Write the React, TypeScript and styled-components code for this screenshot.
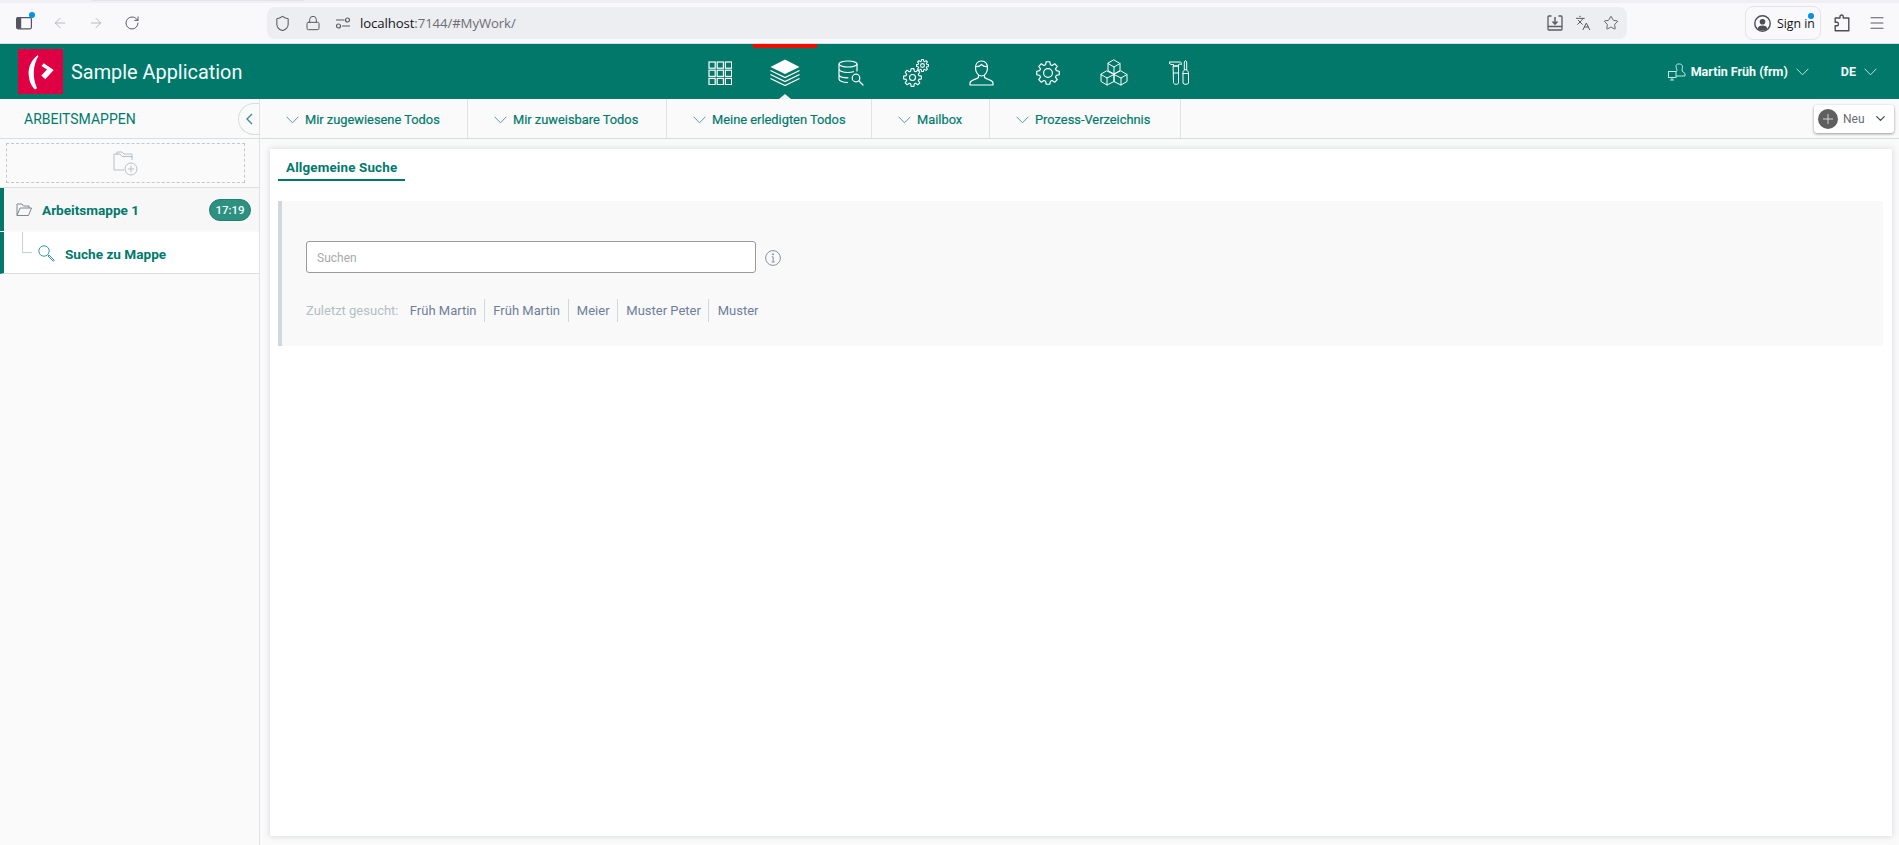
import React from "react";
import styled, { createGlobalStyle } from "styled-components";
import { ArrowLeft, ArrowRight, RotateCw, Shield, Lock, Star, Languages, Menu, ChevronDown, Plus } from "lucide-react";

const Global = createGlobalStyle`
  html, body { margin: 0; padding: 0; height: 100%; overflow: hidden; background: #fafafa; }
  body { font-family: Roboto, "Liberation Sans", Arial, sans-serif; }
  * { box-sizing: border-box; }
`;

const teal = "#007a6c";

const Page = styled.div`
  width: 1899px;
  height: 845px;
  display: flex;
  flex-direction: column;
  overflow: hidden;
`;

/* browser chrome */
const TabStrip = styled.div`
  height: 3px;
  background: #f0f0f4;
  flex: none;
  display: flex;
  padding-left: 92px;
`;
const TabPiece = styled.div`
  width: 212px;
  height: 1px;
  background: #e4e4e8;
`;
const BrowserBar = styled.div`
  height: 41px;
  flex: none;
  background: #f9f9fb;
  border-bottom: 1px solid #dcdce0;
  display: flex;
  align-items: center;
  padding: 0 13px 0 16px;
  color: #5b5b66;
`;
const NavGroup = styled.div`
  display: flex;
  align-items: center;
  gap: 20px;
`;
const TabIconWrap = styled.div`
  position: relative;
  width: 16px;
  height: 16px;
  display: flex;
`;
const Dot = styled.span`
  position: absolute;
  top: -3px;
  right: -3px;
  width: 6px;
  height: 6px;
  border-radius: 50%;
  background: #0090ed;
`;
const AddressBar = styled.div`
  margin-left: 127px;
  width: 1360px;
  height: 32px;
  border-radius: 8px;
  background: #edeef1;
  display: flex;
  align-items: center;
  padding: 0 8px 0 7px;
`;
const AddressIcons = styled.div`
  display: flex;
  align-items: center;
  gap: 14px;
`;
const Url = styled.div`
  margin-left: 9px;
  flex: 1;
  font-size: 13.2px;
  font-family: "Open Sans", Roboto, sans-serif;
  color: #6d6d76;
  letter-spacing: -0.1px;
`;
const UrlHost = styled.span`
  color: #15141a;
`;
const AddressActions = styled.div`
  display: flex;
  align-items: center;
  gap: 12px;
`;
const SignIn = styled.div`
  position: relative;
  margin-left: auto;
  width: 76px;
  height: 34px;
  border: 1px solid #e3e3e8;
  border-radius: 8px;
  display: flex;
  align-items: center;
  gap: 6px;
  padding-left: 8px;
  font-size: 12.3px;
  font-family: "Open Sans", Roboto, sans-serif;
  color: #15141a;
  white-space: nowrap;
`;
const SignInDot = styled(Dot)`
  top: 6px;
  right: 6px;
`;
const ChromeRight = styled.div`
  margin-left: 13px;
  display: flex;
  align-items: center;
  gap: 18px;
`;

/* app header */
const Header = styled.header`
  height: 55px;
  flex: none;
  background: #02786a;
  display: flex;
  align-items: center;
  color: #fff;
`;
const Brand = styled.div`
  width: 687px;
  flex: none;
  display: flex;
  align-items: center;
  padding-left: 18px;
`;
const Logo = styled.svg`
  width: 45px;
  height: 45px;
  flex: none;
`;
const Title = styled.div`
  margin-left: 8px;
  padding-top: 2px;
  font-size: 19.9px;
  color: #f2fffb;
`;
const MainNav = styled.nav`
  display: flex;
  height: 100%;
`;
const NavCell = styled.div<{ $active?: boolean; $w: number }>`
  position: relative;
  width: ${(p) => p.$w}px;
  height: 100%;
  display: flex;
  align-items: center;
  justify-content: center;
  padding-top: 2px;
  color: #fff;
  &::before {
    content: "";
    display: ${(p) => (p.$active ? "block" : "none")};
    position: absolute;
    top: 0;
    left: 1px;
    right: 1px;
    height: 4px;
    background: #ec0d00;
  }
  &::after {
    content: "";
    display: ${(p) => (p.$active ? "block" : "none")};
    position: absolute;
    bottom: 0;
    left: 50%;
    margin-left: -6px;
    border-left: 6px solid transparent;
    border-right: 6px solid transparent;
    border-bottom: 5px solid #eef2f4;
  }
`;
const UserArea = styled.div`
  margin-left: auto;
  display: flex;
  align-items: center;
  padding-right: 22px;
  font-size: 12.5px;
  font-weight: 700;
  color: #f4fffc;
`;
const UserName = styled.span`
  margin-left: 5px;
  margin-right: 8px;
`;
const Lang = styled.span`
  margin-left: 32px;
  margin-right: 8px;
`;

/* body */
const Body = styled.div`
  flex: 1;
  display: flex;
  min-height: 0;
`;
const Sidebar = styled.aside`
  width: 260px;
  flex: none;
  background: #fafafa;
  border-right: 1px solid #dfe3e5;
  display: flex;
  flex-direction: column;
`;
const SideHead = styled.div`
  height: 40px;
  flex: none;
  border-bottom: 1px solid #d9dfe0;
  display: flex;
  align-items: center;
  justify-content: space-between;
  padding-left: 24px;
  font-size: 14px;
  color: ${teal};
`;
const Collapse = styled.div`
  width: 21px;
  height: 32px;
  border: 1px solid #d5dee0;
  border-right: none;
  border-radius: 16px 0 0 16px;
  display: flex;
  align-items: center;
  justify-content: center;
  color: #3c8f98;
`;
const DropWrap = styled.div`
  flex: none;
  padding: 4px 14px 4px 6px;
  border-bottom: 1px solid #dcdfe1;
`;
const DropZone = styled.div`
  height: 40px;
  border: 1px dashed #c4c8cc;
  display: flex;
  align-items: center;
  justify-content: center;
`;
const FolderRow = styled.div`
  height: 43px;
  border-left: 4px solid #02786a;
  background: #f7f7f7;
  display: flex;
  align-items: center;
  padding: 0 8px 0 12px;
  font-size: 13.6px;
  font-weight: 700;
  color: ${teal};
`;
const FolderName = styled.span`
  margin-left: 10px;
`;
const Time = styled.span`
  margin-left: auto;
  width: 42px;
  height: 22px;
  border-radius: 11px;
  background: #2e9080;
  border: 1px solid #1f7f70;
  color: #f3fffb;
  font-size: 11.5px;
  font-weight: 500;
  display: flex;
  align-items: center;
  justify-content: center;
`;
const SearchRow = styled.div`
  margin-top: 1px;
  height: 42px;
  border-left: 4px solid #02786a;
  border-bottom: 1px solid #dcdfe1;
  background: #fff;
  display: flex;
  align-items: flex-start;
  font-size: 13.6px;
  font-weight: 700;
  color: ${teal};
`;
const TreeLine = styled.div`
  margin-left: 18px;
  width: 10px;
  height: 21px;
  border-left: 1px solid #c8d2d6;
  border-bottom: 1px solid #c8d2d6;
`;
const SearchLabel = styled.div`
  margin-left: 6px;
  height: 41px;
  padding-top: 2px;
  display: flex;
  align-items: center;
  gap: 10px;
`;

const Main = styled.main`
  flex: 1;
  min-width: 0;
  display: flex;
  flex-direction: column;
  background: #fafafa;
`;
const SubNav = styled.div`
  height: 40px;
  flex: none;
  display: flex;
  align-items: center;
  border-bottom: 1px solid #d5dcdd;
  padding-right: 5px;
`;
const SubTab = styled.div<{ $w: number }>`
  width: ${(p) => p.$w}px;
  height: 39px;
  display: flex;
  align-items: center;
  gap: 6px;
  padding: 2px 0 0 26px;
  border-right: 1px solid #e0e2e3;
  font-size: 12.85px;
  -webkit-text-stroke: 0.2px ${teal};
  color: ${teal};
  white-space: nowrap;
`;
const NewButton = styled.div`
  margin-left: auto;
  width: 80px;
  height: 28px;
  background: #fff;
  border-radius: 3px;
  box-shadow: 0 1px 3px rgba(0, 0, 0, 0.4);
  display: flex;
  align-items: center;
  padding-left: 4px;
  font-size: 12px;
  color: #666c70;
`;
const PlusCircle = styled.span`
  width: 20px;
  height: 20px;
  border-radius: 50%;
  background: #5f5f5f;
  color: #dff2ea;
  display: flex;
  align-items: center;
  justify-content: center;
  margin-right: 5px;
`;
const NewChevron = styled.span`
  margin-left: 8px;
  display: flex;
  color: #3d4a52;
`;
const Content = styled.div`
  flex: 1;
  min-height: 0;
  padding: 10px 7px 9px 10px;
`;
const Card = styled.section`
  height: 100%;
  background: #fff;
  box-shadow: 0 0 6px rgba(90, 100, 140, 0.25);
  padding: 0 9px 0 8px;
`;
const TabBar = styled.div`
  display: flex;
`;
const ActiveTab = styled.div`
  height: 32px;
  padding: 7px 8px 0;
  display: flex;
  align-items: center;
  border-bottom: 2px solid #02786a;
  font-size: 13.4px;
  font-weight: 700;
  letter-spacing: 0.15px;
  color: ${teal};
`;
const SearchPanel = styled.div`
  margin-top: 20px;
  height: 145px;
  background: #f9f9f9;
  border-left: 4px solid #d0d8df;
  padding: 40px 0 0 24px;
`;
const InputRow = styled.div`
  display: flex;
  align-items: center;
  gap: 9px;
`;
const SearchInput = styled.input`
  width: 450px;
  height: 32px;
  border: 1px solid #9a9a9a;
  border-radius: 3px;
  background: #fff;
  padding: 2px 10px 0;
  font-family: inherit;
  font-size: 12px;
  outline: none;
  &::placeholder { color: #a9a9a9; opacity: 1; }
`;
const InfoWrap = styled.span`
  display: flex;
  padding-top: 2px;
`;
const Recent = styled.div`
  margin-top: 26px;
  display: flex;
  align-items: center;
  height: 23px;
  font-size: 13px;
`;
const RecentLabel = styled.span`
  color: #b4bfc6;
  margin-right: 3px;
`;
const RecentItem = styled.span<{ $last?: boolean }>`
  height: 100%;
  display: flex;
  align-items: center;
  padding: 0 7.5px 0 8.3px;
  color: #6e7f9c;
  border-right: ${(p) => (p.$last ? "none" : "1px solid #cfd8dc")};
`;

/* drawings */
const Svg = styled.svg`
  display: block;
  flex: none;
`;

function gearPath(cx: number, cy: number, R: number, r: number, teeth: number) {
  const step = (Math.PI * 2) / teeth;
  const pts: string[] = [];
  for (let i = 0; i < teeth; i++) {
    const a = i * step - Math.PI / 2;
    const w = step * 0.2;
    const seq: [number, number][] = [
      [r, a - step * 0.36],
      [R, a - w],
      [R, a + w],
      [r, a + step * 0.36],
    ];
    seq.forEach(([rad, an]) => pts.push(`${(cx + rad * Math.cos(an)).toFixed(2)} ${(cy + rad * Math.sin(an)).toFixed(2)}`));
  }
  return "M" + pts.join("L") + "Z";
}

const LineProps = { fill: "none", stroke: "currentColor", strokeWidth: 1.2, strokeLinejoin: "round" as const, strokeLinecap: "round" as const };

const GridIcon = () => (
  <Svg width="24" height="24" viewBox="0 0 24 24" {...LineProps}>
    {[0, 1, 2].flatMap((r) =>
      [0, 1, 2].map((c) => <rect key={`${r}${c}`} x={1 + c * 8.2} y={1 + r * 8.2} width="6.2" height="6.2" strokeLinejoin="miter" />)
    )}
  </Svg>
);
const LayersIcon = () => (
  <Svg width="30" height="27" viewBox="0 0 30 27">
    <path d="M15 0.5 L29.5 8 L15 15 L0.5 8 Z" fill="currentColor" />
    <path d="M0.5 11.5 L15 18.5 L29.5 11.5 M0.5 15.5 L15 22.5 L29.5 15.5 M0.5 19.5 L15 26.5 L29.5 19.5" fill="none" stroke="currentColor" strokeWidth="1.3" />
  </Svg>
);
const DbIcon = () => (
  <Svg width="26" height="26" viewBox="0 0 26 26" {...LineProps}>
    <ellipse cx="10" cy="4" rx="9" ry="3" />
    <path d="M1 4 V19 C1 21 5 22.5 9.5 22.5 M19 4 V11 M1 9 C1 11 5 12.5 10 12.5 C12 12.5 14 12.2 15.5 11.7 M1 14.5 C1 16.5 5 17.8 10 17.8" />
    <circle cx="18" cy="18" r="3.8" />
    <path d="M21 21 L25 25" />
  </Svg>
);
const GearsIcon = () => (
  <Svg width="26" height="28" viewBox="0 0 26 28" {...LineProps} strokeWidth={1.1}>
    <path d={gearPath(9.5, 18.5, 9, 6.6, 8)} />
    <circle cx="9.5" cy="18.5" r="3" />
    <path d={gearPath(19.5, 6.5, 6, 4.4, 8)} />
    <circle cx="19.5" cy="6.5" r="1.9" />
  </Svg>
);
const UserIcon = () => (
  <Svg width="25" height="26" viewBox="0 0 25 26" {...LineProps}>
    <path d="M12.5 1 C8.5 1 6.5 4 6.5 8 C6.5 12 9 16 12.5 16 C16 16 18.5 12 18.5 8 C18.5 4 16.5 1 12.5 1 Z" />
    <path d="M6.7 6.5 C9 7 11 6 12.5 4.5 C14 6 16 7 18.3 6.5" />
    <path d="M9.5 15 V17.5 C7 19.5 1 20 1 23 V25 H24 V23 C24 20 18 19.5 15.5 17.5 V15" />
  </Svg>
);
const CogIcon = () => (
  <Svg width="24" height="24" viewBox="0 0 24 24" {...LineProps}>
    <path d={gearPath(12, 12, 11.4, 8.6, 8)} />
    <circle cx="12" cy="12" r="4.4" />
  </Svg>
);
const CubesIcon = () => (
  <Svg width="28" height="27" viewBox="0 0 28 27" {...LineProps} strokeWidth={1}>
    <path d="M14 1 L20 4.5 V11.5 L14 15 L8 11.5 V4.5 Z M8 4.5 L14 8 L20 4.5 M14 8 V15" />
    <path d="M7 12 L14 15.5 V22.5 L7 26 L1 22.5 V15.5 Z M1 15.5 L7 19 L14 15.5 M7 19 V26" />
    <path d="M21 12 L27 15.5 V22.5 L21 26 L14 22.5 V15.5 Z M14 15.5 L21 19 L27 15.5 M21 19 V26" />
  </Svg>
);
const ToolsIcon = () => (
  <Svg width="20" height="26" viewBox="0 0 20 26" {...LineProps} strokeWidth={1}>
    <path d="M0.5 2 H11 C12 2 12.5 3 12.5 4.5 C11.5 4 10.5 4 9.5 4.5 V6 H4.5 V4.5 H2 L0.5 3.5 Z" />
    <path d="M4.5 6 H9.5 V23 C9.5 24.8 4.5 24.8 4.5 23 Z M4.5 13 H9.5" />
    <path d="M15.3 10 V2 L16.5 0.5 L17.7 2 V10" />
    <path d="M15.3 10 C14 11 14 12 14 13 V23 C14 24.8 19.5 24.8 19.5 23 V13 C19.5 12 19 11 17.7 10 Z M14 13.5 H19.5" />
  </Svg>
);

const Chevron = ({ size = 13, color = "#4f9aa0" }: { size?: number; color?: string }) => (
  <Svg width={size} height={size * 0.6} viewBox="0 0 13 8" fill="none" stroke={color} strokeWidth="1">
    <path d="M0.5 0.8 L6.5 7 L12.5 0.8" />
  </Svg>
);

const TabIcon = () => (
  <Svg width="16" height="16" viewBox="0 0 16 16">
    <rect x="0.6" y="2.6" width="14.8" height="11.2" rx="1.5" fill="none" stroke="#55555f" strokeWidth="1.2" />
    <rect x="0.6" y="2.6" width="4.6" height="11.2" rx="1" fill="#55555f" />
  </Svg>
);
const PermIcon = () => (
  <Svg width="16" height="16" viewBox="0 0 16 16" fill="none" stroke="#5b5b66" strokeWidth="1.2">
    <path d="M1 5 H9.5 M7 11 H15" />
    <circle cx="12.5" cy="5" r="2" />
    <circle cx="3.5" cy="11" r="2" />
  </Svg>
);
const SaveIcon = () => (
  <Svg width="16" height="16" viewBox="0 0 16 16" fill="none" stroke="#5b5b66" strokeWidth="1.3">
    <path d="M4.5 1 H1.8 C1.2 1 1 1.4 1 2 V14 C1 14.6 1.2 15 1.8 15 H14.2 C14.8 15 15 14.6 15 14 V2 C15 1.4 14.8 1 14.2 1 H11.5 M1 11.5 H15" />
    <path d="M8 2 V9 M5.5 6.5 L8 9.2 L10.5 6.5" strokeWidth="1.5" />
  </Svg>
);
const AvatarIcon = () => (
  <Svg width="17" height="17" viewBox="0 0 17 17">
    <circle cx="8.5" cy="8.5" r="7.7" fill="none" stroke="#4d4d58" strokeWidth="1.4" />
    <circle cx="8.5" cy="6.8" r="2.8" fill="#4d4d58" />
    <path d="M3.6 13.4 C4.4 11 6.4 10.4 8.5 10.4 C10.6 10.4 12.6 11 13.4 13.4 C12 14.8 10.2 15.3 8.5 15.3 C6.8 15.3 5 14.8 3.6 13.4 Z" fill="#4d4d58" />
  </Svg>
);
const PuzzleIcon = () => (
  <Svg width="16" height="18" viewBox="0 0 16 18" fill="none" stroke="#4d4d58" strokeWidth="1.4" strokeLinejoin="round">
    <path d="M6 2.2 C6 0.6 9.2 0.6 9.2 2.2 V4 H14.8 V16.8 H1.2 V11.8 H3.2 C4.8 11.8 4.8 8.2 3.2 8.2 H1.2 V4 H6 Z" />
  </Svg>
);
const LogoMark = () => (
  <Logo viewBox="0 0 45 45">
    <rect width="45" height="45" fill="#df0043" />
    <path d="M19.5 6.2 C13.5 11 10 18 10.7 26 C11.2 32 13.5 37.5 17 40.5 L19 39.2 C16.5 33.5 15.6 28 15.8 23 C16 17 17.5 12 20.5 7 Z" fill="#fff" />
    <path d="M25.7 14.3 L35.7 21 L27.3 30.3 L23.3 26.6 L29 20.5 L23.5 17 Z" fill="#fff" />
  </Logo>
);
const UserDeskIcon = () => (
  <Svg width="18" height="18" viewBox="0 0 18 18" fill="none" stroke="#bfe8ee" strokeWidth="1">
    <path d="M10 1 C8.8 1 8 2 8 3.5 C8 5 9 6 9 7.5 L7 9.5 V13 H17 V10.5 L14 8 C14 6.5 14.5 5 14.5 3.5 C14.5 2 13 1 11.5 1 Z" />
    <rect x="0.5" y="8.5" width="7.5" height="6" fill="#02786a" />
    <path d="M2 17 H6 M4 15 V17" />
  </Svg>
);
const FolderAdd = () => (
  <Svg width="25" height="25" viewBox="0 0 25 25" fill="none" stroke="#b9c1c8" strokeWidth="1">
    <path d="M4 4 V1 H9 L11 3 H19 V7" />
    <path d="M1 3 H7 L9 5.5 H19 V9 M1 3 V19 H11" />
    <circle cx="18" cy="18" r="6" />
    <path d="M18 14.8 V21.2 M14.8 18 H21.2" />
  </Svg>
);
const FolderOpen = () => (
  <Svg width="16" height="14" viewBox="0 0 16 14" fill="none" stroke="#7e8890" strokeWidth="1">
    <path d="M1 12.5 V1 H6 L7.5 3 H13 V5" />
    <path d="M1 12.5 H12.5 L15.5 5 H4 Z" />
  </Svg>
);
const MagnifierIcon = () => (
  <Svg width="17" height="17" viewBox="0 0 17 17" fill="none" stroke="#3d97a2" strokeWidth="1">
    <circle cx="6" cy="6" r="5.2" />
    <path d="M9.8 9.8 L11 11 M11 10 L16 15 C16.4 15.5 15.5 16.4 15 16 L10 11 Z" />
  </Svg>
);
const InfoIcon = () => (
  <Svg width="16" height="16" viewBox="0 0 16 16" fill="none" stroke="#7f95a8" strokeWidth="1">
    <circle cx="8" cy="8" r="7.4" />
    <path d="M6.8 6.8 H8.2 V12 M6.6 12 H9.6" />
    <circle cx="8" cy="4.3" r="0.6" fill="#7f95a8" />
  </Svg>
);
const CollapseGlyph = () => (
  <Svg width="7" height="12" viewBox="0 0 7 12" fill="none" stroke="currentColor" strokeWidth="1.4">
    <path d="M6 1 L1 6 L6 11" />
  </Svg>
);

const navIcons = [
  { Icon: GridIcon, w: 65 },
  { Icon: LayersIcon, w: 66 },
  { Icon: DbIcon, w: 66 },
  { Icon: GearsIcon, w: 64 },
  { Icon: UserIcon, w: 66 },
  { Icon: CogIcon, w: 67 },
  { Icon: CubesIcon, w: 65 },
  { Icon: ToolsIcon, w: 65 },
];
const subTabs = [
  { label: "Mir zugewiesene Todos", w: 208 },
  { label: "Mir zuweisbare Todos", w: 199 },
  { label: "Meine erledigten Todos", w: 205 },
  { label: "Mailbox", w: 118 },
  { label: "Prozess-Verzeichnis", w: 191 },
];
const recents = ["Früh Martin", "Früh Martin", "Meier", "Muster Peter", "Muster"];

export default function App() {
  return (
    <Page>
      <Global />
      <TabStrip>
        <TabPiece />
      </TabStrip>
      <BrowserBar>
        <NavGroup>
          <TabIconWrap>
            <TabIcon />
            <Dot />
          </TabIconWrap>
          <ArrowLeft size={16} color="#b4b4ba" strokeWidth={1.4} />
          <ArrowRight size={16} color="#b4b4ba" strokeWidth={1.4} />
          <RotateCw size={16} color="#5b5b66" strokeWidth={1.5} />
        </NavGroup>
        <AddressBar>
          <AddressIcons>
            <Shield size={17} color="#5b5b66" strokeWidth={1.5} />
            <Lock size={16} color="#5b5b66" strokeWidth={1.5} />
            <PermIcon />
          </AddressIcons>
          <Url>
            <UrlHost>localhost</UrlHost>:7144/#MyWork/
          </Url>
          <AddressActions>
            <SaveIcon />
            <Languages size={16} color="#5b5b66" strokeWidth={1.5} />
            <Star size={16} color="#5b5b66" strokeWidth={1.4} />
          </AddressActions>
        </AddressBar>
        <SignIn>
          <AvatarIcon />
          Sign in
          <SignInDot />
        </SignIn>
        <ChromeRight>
          <PuzzleIcon />
          <Menu size={18} color="#5b5b66" strokeWidth={1.4} />
        </ChromeRight>
      </BrowserBar>

      <Header>
        <Brand>
          <LogoMark />
          <Title>Sample Application</Title>
        </Brand>
        <MainNav>
          {navIcons.map(({ Icon, w }, i) => (
            <NavCell key={i} $w={w} $active={i === 1}>
              <Icon />
            </NavCell>
          ))}
        </MainNav>
        <UserArea>
          <UserDeskIcon />
          <UserName>Martin Früh (frm)</UserName>
          <Chevron color="#bfe5dc" />
          <Lang>DE</Lang>
          <Chevron color="#bfe5dc" />
        </UserArea>
      </Header>

      <Body>
        <Sidebar>
          <SideHead>
            ARBEITSMAPPEN
            <Collapse>
              <CollapseGlyph />
            </Collapse>
          </SideHead>
          <DropWrap>
            <DropZone>
              <FolderAdd />
            </DropZone>
          </DropWrap>
          <FolderRow>
            <FolderOpen />
            <FolderName>Arbeitsmappe 1</FolderName>
            <Time>17:19</Time>
          </FolderRow>
          <SearchRow>
            <TreeLine />
            <SearchLabel>
              <MagnifierIcon />
              Suche zu Mappe
            </SearchLabel>
          </SearchRow>
        </Sidebar>

        <Main>
          <SubNav>
            {subTabs.map((t) => (
              <SubTab key={t.label} $w={t.w}>
                <Chevron />
                {t.label}
              </SubTab>
            ))}
            <NewButton>
              <PlusCircle>
                <Plus size={16} strokeWidth={1.2} />
              </PlusCircle>
              Neu
              <NewChevron>
                <ChevronDown size={15} strokeWidth={2} />
              </NewChevron>
            </NewButton>
          </SubNav>
          <Content>
            <Card>
              <TabBar>
                <ActiveTab>Allgemeine Suche</ActiveTab>
              </TabBar>
              <SearchPanel>
                <InputRow>
                  <SearchInput placeholder="Suchen" />
                  <InfoWrap>
                    <InfoIcon />
                  </InfoWrap>
                </InputRow>
                <Recent>
                  <RecentLabel>Zuletzt gesucht:</RecentLabel>
                  {recents.map((r, i) => (
                    <RecentItem key={i} $last={i === recents.length - 1}>
                      {r}
                    </RecentItem>
                  ))}
                </Recent>
              </SearchPanel>
            </Card>
          </Content>
        </Main>
      </Body>
    </Page>
  );
}
